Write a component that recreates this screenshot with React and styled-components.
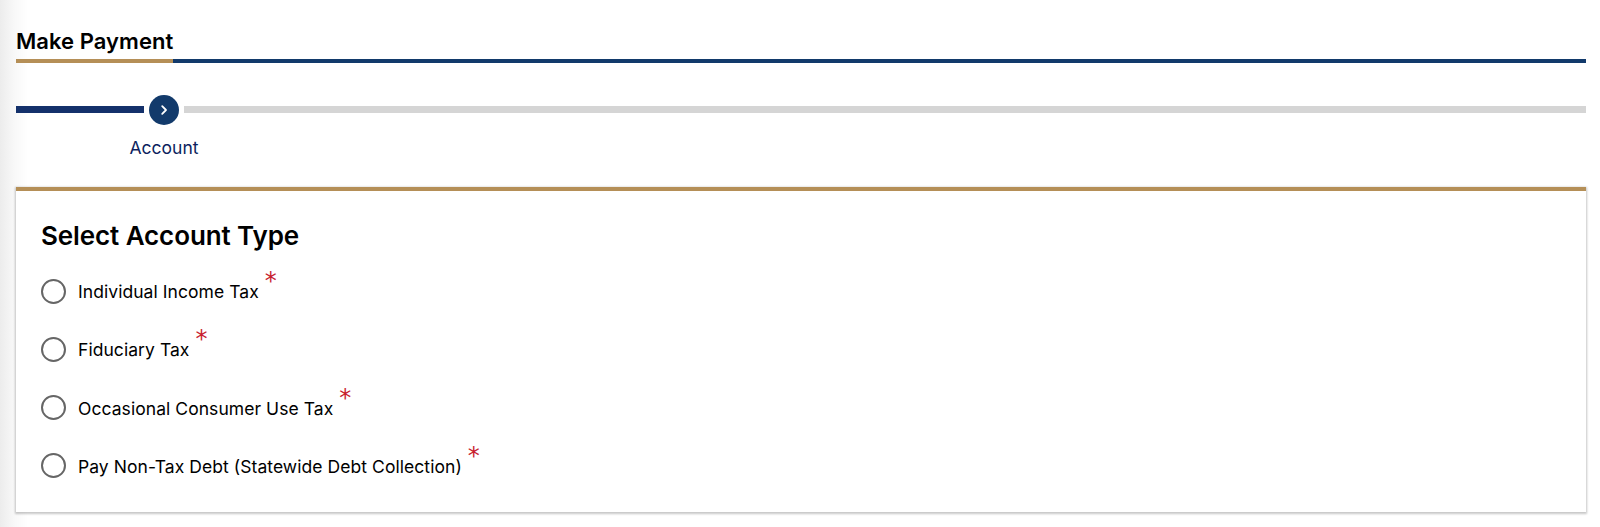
import React from "react";
import styled, { createGlobalStyle } from "styled-components";

const Global = createGlobalStyle`
  html, body { margin: 0; padding: 0; }
  body {
    background: linear-gradient(to right, #ececec 0, #f8f8f8 14px, #ffffff 28px);
    font-family: Inter, "Liberation Sans", sans-serif;
    color: #000;
  }
`;
const Page = styled.div`
  width: 1570px;
  height: 527px;
  padding: 0 14px 0 16px;
  box-sizing: content-box;
  display: flex;
  flex-direction: column;
  overflow: hidden;
`;
const TitleBar = styled.div`
  margin-top: 27px;
  border-bottom: 4.5px solid #123a6b;
  display: flex;
`;
const Title = styled.h1`
  margin: 0 0 -4.5px;
  padding-bottom: 4px;
  height: 28px;
  line-height: 28px;
  font-size: 22px;
  font-weight: 600;
  letter-spacing: 0.05px;
  white-space: nowrap;
  border-bottom: 4.5px solid #b58f57;
`;
const Stepper = styled.div`
  margin-top: 32px;
  display: flex;
  align-items: center;
  gap: 5px;
`;
const DoneLine = styled.div`
  width: 128px;
  height: 7px;
  background: #14316b;
`;
const TodoLine = styled.div`
  flex: 1;
  height: 7px;
  background: #d5d5d5;
`;
const StepDot = styled.div`
  width: 30px;
  height: 30px;
  border-radius: 50%;
  background: #123a6b;
  display: flex;
  align-items: center;
  justify-content: center;
`;
const StepLabels = styled.div`
  margin-top: 11px;
  padding-left: 98px;
  height: 24px;
`;
const StepLabel = styled.div`
  width: 100px;
  text-align: center;
  font-size: 17.5px;
  line-height: 24px;
  color: #0d1f5e;
`;
const Card = styled.section`
  margin-top: 27.5px;
  height: 325px;
  box-sizing: border-box;
  border-top: 4.5px solid #b58f57;
  background: #fff;
  box-shadow: 0 1px 2px 1px rgba(0, 0, 0, 0.22);
  padding: 29px 25px 0;
`;
const CardTitle = styled.h2`
  margin: 0;
  font-size: 26px;
  line-height: 32px;
  font-weight: 600;
  letter-spacing: -0.1px;
`;
const Options = styled.div`
  margin-top: 26.5px;
  display: flex;
  flex-direction: column;
  gap: 33.3px;
`;
const Option = styled.label`
  display: flex;
  align-items: center;
  gap: 12px;
  height: 25px;
`;
const Radio = styled.span`
  width: 25px;
  height: 25px;
  box-sizing: border-box;
  border: 2px solid #666;
  border-radius: 50%;
  flex: none;
`;
const OptionText = styled.span`
  font-size: 17.5px;
  line-height: 25px;
  padding-top: 1px;
  white-space: nowrap;
  letter-spacing: 0.06px;
`;
const Required = styled.span`
  color: #c8202e;
  font-size: 24px;
  line-height: 24px;
  margin-left: -6px;
  align-self: flex-start;
  margin-top: -9.5px;
  font-family: "DejaVu Sans", sans-serif;
`;

const options = [
  "Individual Income Tax",
  "Fiduciary Tax",
  "Occasional Consumer Use Tax",
  "Pay Non-Tax Debt (Statewide Debt Collection)",
];

export default function App() {
  return (
    <>
      <Global />
      <Page>
        <TitleBar>
          <Title>Make Payment</Title>
        </TitleBar>
        <Stepper>
          <DoneLine />
          <StepDot>
            <svg width="12" height="12" viewBox="0 0 12 12" fill="none">
              <path d="M4.2 2.2 8 6l-3.8 3.8" stroke="#fff" strokeWidth="1.8" strokeLinecap="round" strokeLinejoin="round" />
            </svg>
          </StepDot>
          <TodoLine />
        </Stepper>
        <StepLabels>
          <StepLabel>Account</StepLabel>
        </StepLabels>
        <Card>
          <CardTitle>Select Account Type</CardTitle>
          <Options>
            {options.map((o) => (
              <Option key={o}>
                <Radio />
                <OptionText>{o}</OptionText>
                <Required>*</Required>
              </Option>
            ))}
          </Options>
        </Card>
      </Page>
    </>
  );
}
